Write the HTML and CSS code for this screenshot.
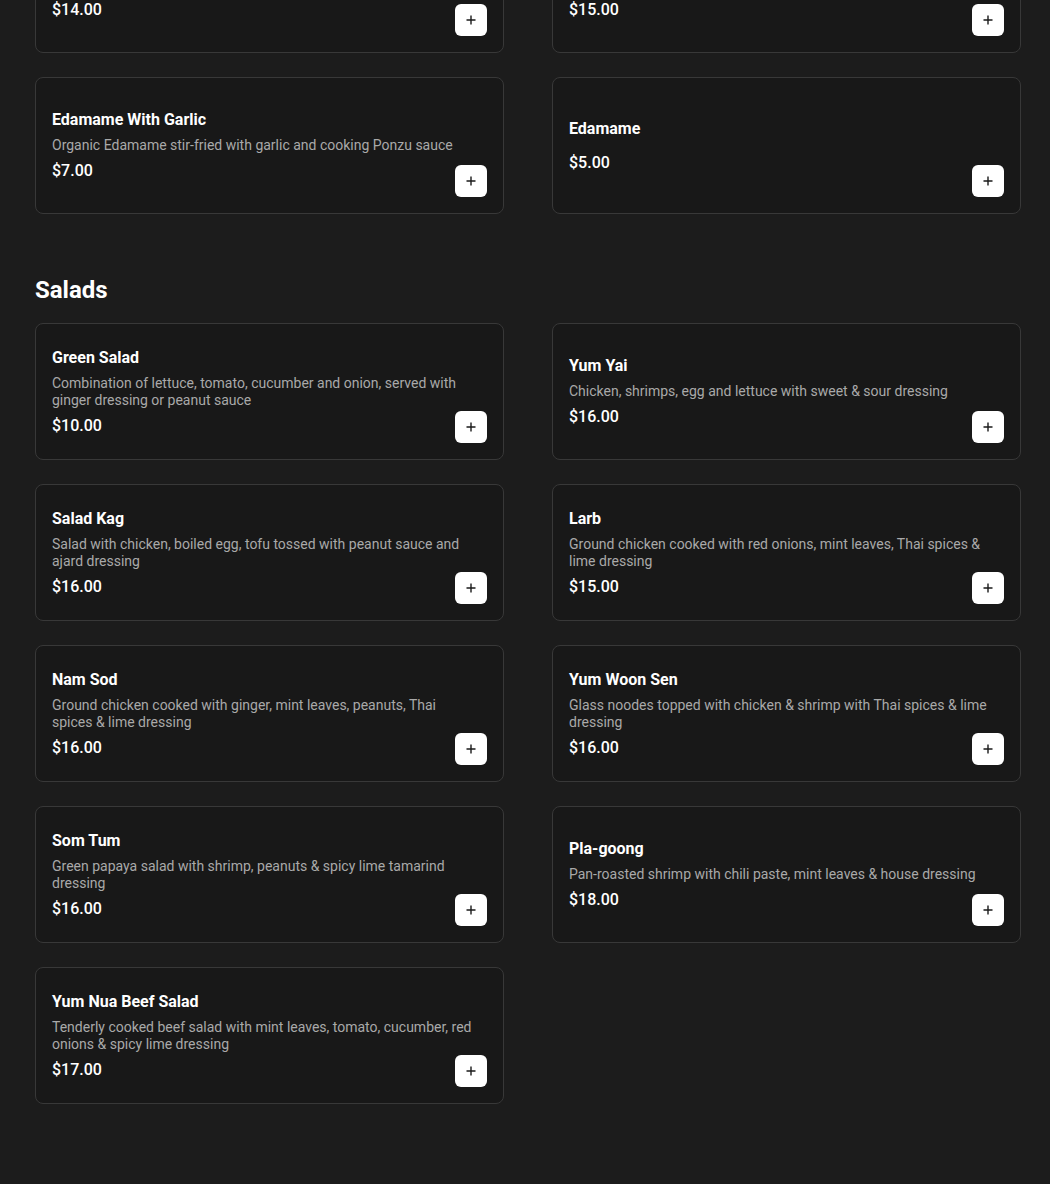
FILE: index.html
```html
<!DOCTYPE html>
<html lang="en">
<head>
<meta charset="utf-8">
<title>Menu</title>
<link rel="stylesheet" href="styles.css">
</head>
<body>
<main class="page">
  <section class="section">
    <div class="grid">
      <div class="card">
        <div class="info">
          <div class="title">Gyoza</div>
          <div class="desc">Pan-fried pork and vegetable dumplings</div>
          <div class="price">$14.00</div>
        </div>
        <button class="add" aria-label="Add"><svg viewBox="0 0 12 12" width="12" height="12"><path d="M6 1.5v9M1.5 6h9" stroke="#1a1a1a" stroke-width="1.4" fill="none"/></svg></button>
      </div>
      <div class="card">
        <div class="info">
          <div class="title">Crispy Spring Rolls</div>
          <div class="desc">Vegetable spring rolls with sweet chili sauce</div>
          <div class="price">$15.00</div>
        </div>
        <button class="add" aria-label="Add"><svg viewBox="0 0 12 12" width="12" height="12"><path d="M6 1.5v9M1.5 6h9" stroke="#1a1a1a" stroke-width="1.4" fill="none"/></svg></button>
      </div>
      <div class="card">
        <div class="info">
          <div class="title">Edamame With Garlic</div>
          <div class="desc">Organic Edamame stir-fried with garlic and cooking Ponzu sauce</div>
          <div class="price">$7.00</div>
        </div>
        <button class="add" aria-label="Add"><svg viewBox="0 0 12 12" width="12" height="12"><path d="M6 1.5v9M1.5 6h9" stroke="#1a1a1a" stroke-width="1.4" fill="none"/></svg></button>
      </div>
      <div class="card">
        <div class="info">
          <div class="title">Edamame</div>
          <div class="desc"></div>
          <div class="price">$5.00</div>
        </div>
        <button class="add" aria-label="Add"><svg viewBox="0 0 12 12" width="12" height="12"><path d="M6 1.5v9M1.5 6h9" stroke="#1a1a1a" stroke-width="1.4" fill="none"/></svg></button>
      </div>
    </div>
  </section>

  <section class="section">
    <h2 class="heading">Salads</h2>
    <div class="grid">
      <div class="card">
        <div class="info">
          <div class="title">Green Salad</div>
          <div class="desc">Combination of lettuce, tomato, cucumber and onion, served with ginger dressing or peanut sauce</div>
          <div class="price">$10.00</div>
        </div>
        <button class="add" aria-label="Add"><svg viewBox="0 0 12 12" width="12" height="12"><path d="M6 1.5v9M1.5 6h9" stroke="#1a1a1a" stroke-width="1.4" fill="none"/></svg></button>
      </div>
      <div class="card">
        <div class="info">
          <div class="title">Yum Yai</div>
          <div class="desc">Chicken, shrimps, egg and lettuce with sweet &amp; sour dressing</div>
          <div class="price">$16.00</div>
        </div>
        <button class="add" aria-label="Add"><svg viewBox="0 0 12 12" width="12" height="12"><path d="M6 1.5v9M1.5 6h9" stroke="#1a1a1a" stroke-width="1.4" fill="none"/></svg></button>
      </div>
      <div class="card">
        <div class="info">
          <div class="title">Salad Kag</div>
          <div class="desc">Salad with chicken, boiled egg, tofu tossed with peanut sauce and ajard dressing</div>
          <div class="price">$16.00</div>
        </div>
        <button class="add" aria-label="Add"><svg viewBox="0 0 12 12" width="12" height="12"><path d="M6 1.5v9M1.5 6h9" stroke="#1a1a1a" stroke-width="1.4" fill="none"/></svg></button>
      </div>
      <div class="card">
        <div class="info">
          <div class="title">Larb</div>
          <div class="desc">Ground chicken cooked with red onions, mint leaves, Thai spices &amp; lime dressing</div>
          <div class="price">$15.00</div>
        </div>
        <button class="add" aria-label="Add"><svg viewBox="0 0 12 12" width="12" height="12"><path d="M6 1.5v9M1.5 6h9" stroke="#1a1a1a" stroke-width="1.4" fill="none"/></svg></button>
      </div>
      <div class="card">
        <div class="info">
          <div class="title">Nam Sod</div>
          <div class="desc">Ground chicken cooked with ginger, mint leaves, peanuts, Thai spices &amp; lime dressing</div>
          <div class="price">$16.00</div>
        </div>
        <button class="add" aria-label="Add"><svg viewBox="0 0 12 12" width="12" height="12"><path d="M6 1.5v9M1.5 6h9" stroke="#1a1a1a" stroke-width="1.4" fill="none"/></svg></button>
      </div>
      <div class="card">
        <div class="info">
          <div class="title">Yum Woon Sen</div>
          <div class="desc">Glass noodes topped with chicken &amp; shrimp with Thai spices &amp; lime dressing</div>
          <div class="price">$16.00</div>
        </div>
        <button class="add" aria-label="Add"><svg viewBox="0 0 12 12" width="12" height="12"><path d="M6 1.5v9M1.5 6h9" stroke="#1a1a1a" stroke-width="1.4" fill="none"/></svg></button>
      </div>
      <div class="card">
        <div class="info">
          <div class="title">Som Tum</div>
          <div class="desc">Green papaya salad with shrimp, peanuts &amp; spicy lime tamarind dressing</div>
          <div class="price">$16.00</div>
        </div>
        <button class="add" aria-label="Add"><svg viewBox="0 0 12 12" width="12" height="12"><path d="M6 1.5v9M1.5 6h9" stroke="#1a1a1a" stroke-width="1.4" fill="none"/></svg></button>
      </div>
      <div class="card">
        <div class="info">
          <div class="title">Pla-goong</div>
          <div class="desc">Pan-roasted shrimp with chili paste, mint leaves &amp; house dressing</div>
          <div class="price">$18.00</div>
        </div>
        <button class="add" aria-label="Add"><svg viewBox="0 0 12 12" width="12" height="12"><path d="M6 1.5v9M1.5 6h9" stroke="#1a1a1a" stroke-width="1.4" fill="none"/></svg></button>
      </div>
      <div class="card">
        <div class="info">
          <div class="title">Yum Nua Beef Salad</div>
          <div class="desc">Tenderly cooked beef salad with mint leaves, tomato, cucumber, red onions &amp; spicy lime dressing</div>
          <div class="price">$17.00</div>
        </div>
        <button class="add" aria-label="Add"><svg viewBox="0 0 12 12" width="12" height="12"><path d="M6 1.5v9M1.5 6h9" stroke="#1a1a1a" stroke-width="1.4" fill="none"/></svg></button>
      </div>
    </div>
  </section>
</main>
</body>
</html>
```

FILE: styles.css
```css
html, body {
  margin: 0;
  padding: 0;
  background: #1c1c1c;
}

body {
  font-family: Roboto, "Noto Sans", Arial, sans-serif;
  color: #ffffff;
}

.page {
  margin-top: -84px;
  padding: 0 29px 80px 35px;
}

.grid {
  display: grid;
  grid-template-columns: 469px 469px;
  column-gap: 48px;
  row-gap: 24px;
}

.heading {
  margin: 60px 0 17px;
  font-size: 24px;
  line-height: 32px;
  font-weight: 700;
  color: #ffffff;
}

.card {
  box-sizing: border-box;
  height: 137px;
  padding: 16px;
  border: 1px solid #383838;
  border-radius: 8px;
  background: #181818;
  display: grid;
  grid-template-columns: 1fr;
  grid-template-rows: 1fr;
}

.info {
  grid-area: 1 / 1;
  align-self: center;
  display: flex;
  flex-direction: column;
  gap: 5px;
  padding-right: 11px;
}

.title {
  font-size: 16px;
  line-height: 24px;
  font-weight: 700;
  color: #ffffff;
}

.desc {
  font-size: 14px;
  line-height: 17px;
  color: #a9a9a9;
}

.price {
  font-size: 16px;
  line-height: 24px;
  font-weight: 500;
  color: #ffffff;
}

.add {
  grid-area: 1 / 1;
  justify-self: end;
  align-self: end;
  width: 32px;
  height: 32px;
  padding: 0;
  border: none;
  border-radius: 6px;
  background: #ffffff;
  display: flex;
  align-items: center;
  justify-content: center;
  cursor: pointer;
}
```
